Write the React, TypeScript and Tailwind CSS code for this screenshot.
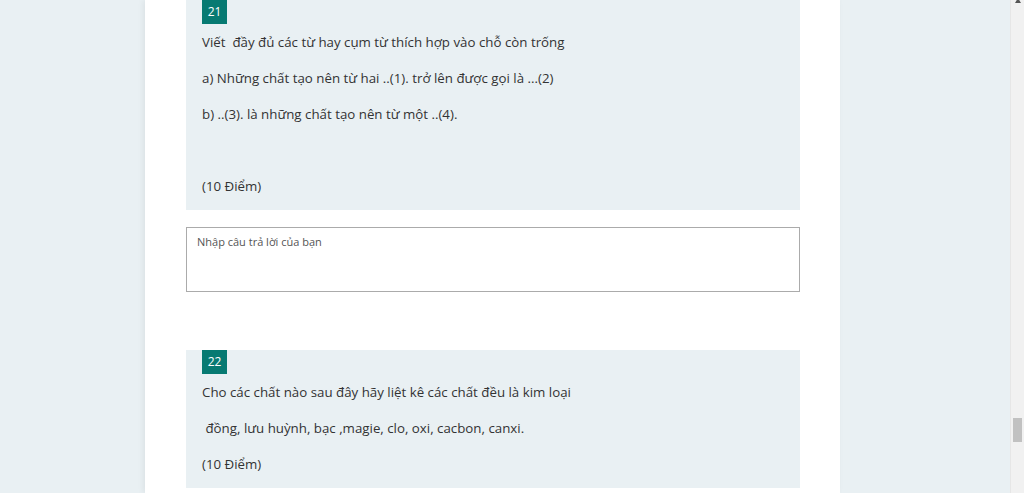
const Q21_LINES = [
  'Viết  đầy đủ các từ hay cụm từ thích hợp vào chỗ còn trống',
  'a) Những chất tạo nên từ hai ..(1). trở lên được gọi là ...(2)',
  'b) ..(3). là những chất tạo nên từ một ..(4).',
  '',
  '(10 Điểm)',
];

const Q22_LINES = [
  'Cho các chất nào sau đây hãy liệt kê các chất đều là kim loại',
  ' đồng, lưu huỳnh, bạc ,magie, clo, oxi, cacbon, canxi.',
  '(10 Điểm)',
];

function Question({ num, lines, pb }: { num: number; lines: string[]; pb: string }) {
  return (
    <div className={`bg-[#e9f0f3] px-4 ${pb}`}>
      <div className="flex h-6 w-[25px] items-center justify-center bg-[#077a72] text-[12px] text-white">{num}</div>
      {lines.map((l, i) => (
        <div key={i} className="h-9 pt-[2px] flex items-center whitespace-pre text-[13.3px] text-[#333]">
          {l}
        </div>
      ))}
    </div>
  );
}

export default function App() {
  return (
    <div
      className="flex h-[493px] w-[1024px] overflow-hidden bg-[#e9f0f3]"
      style={{ fontFamily: '"Open Sans", "Noto Sans", sans-serif' }}
    >
      <div className="flex-1 min-w-0">
        <div className="ml-[145px] h-full w-[695px] bg-white pl-[41px] pr-[40px] shadow-[-2px_0_6px_rgba(0,0,0,0.06)]">
          <Question num={21} lines={Q21_LINES} pb="pb-[6px]" />
          <div className="mt-[17px] h-[65px] border border-[#ababab] bg-white px-[10px] pt-[6px] text-[11px] text-[#555]">
            Nhập câu trả lời của bạn
          </div>
          <div className="mt-[58px]">
            <Question num={22} lines={Q22_LINES} pb="pb-[6px]" />
          </div>
        </div>
      </div>
      <div className="relative w-[14px] bg-[#f1f1f1] border-l border-[#e6e6e6]">
        <div className="absolute left-[4px] top-[-2px] h-0 w-0 border-x-[3px] border-b-[5px] border-x-transparent border-b-[#555]" />
        <div className="absolute left-[2px] top-[418px] h-[24px] w-[9px] bg-[#c1c1c1]" />
      </div>
    </div>
  );
}
